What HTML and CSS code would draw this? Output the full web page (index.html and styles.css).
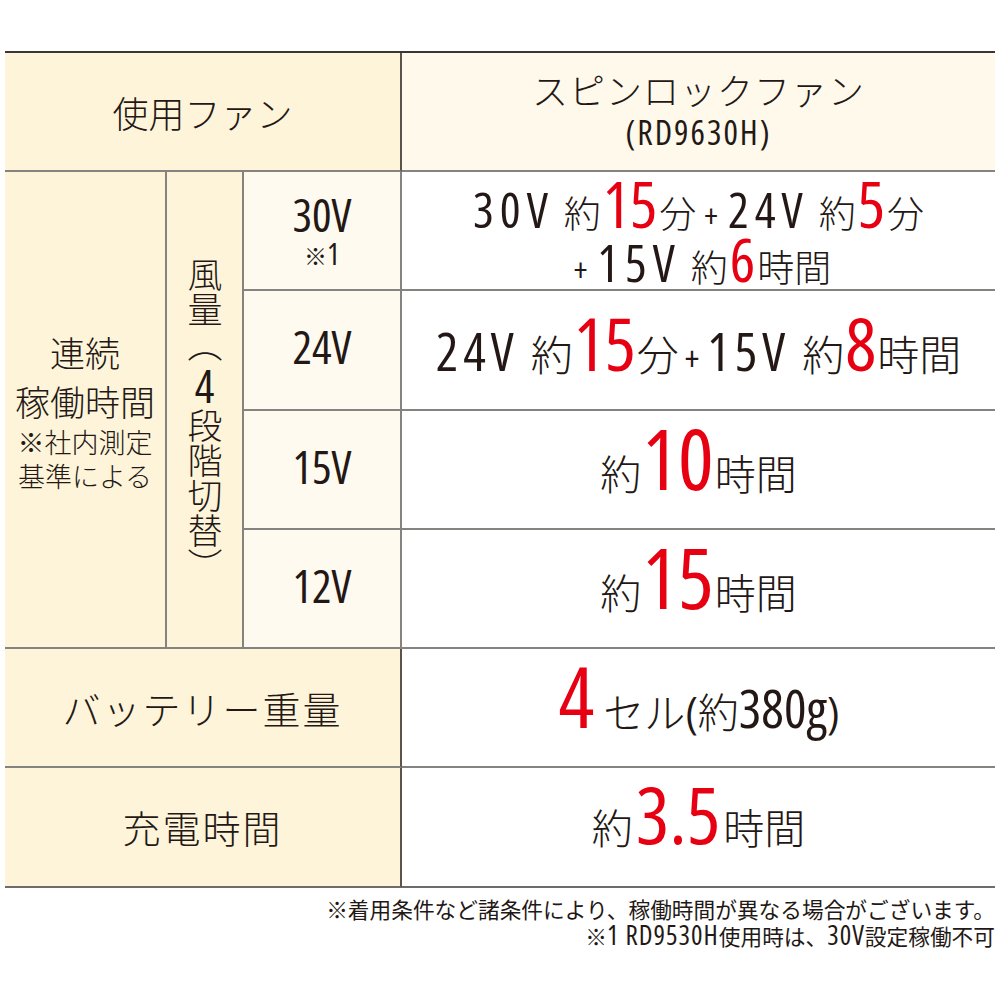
FILE: index.html
```html
<!DOCTYPE html>
<html lang="ja">
<head>
<meta charset="utf-8">
<title>スピンロックファン 仕様</title>
<link rel="stylesheet" href="styles.css">
</head>
<body>
<div class="sheet">
  <div class="spec">
    <div class="cell head span3"><span class="t36">使用ファン</span></div>
    <div class="cell head-r">
      <div class="fan">スピンロックファン</div>
      <div class="model">(RD9630H)</div>
    </div>

    <div class="cell run">
      <div class="run-big">連続</div>
      <div class="run-big">稼働時間</div>
      <div class="run-small">※社内測定</div>
      <div class="run-small">基準による</div>
    </div>
    <div class="cell wind"><span class="vt">風量（<span class="tcu">4</span>段階切替）</span></div>

    <div class="cell volt v30"><span class="vlab">30V</span><span class="vnote"><span class="kome">※</span>1</span></div>
    <div class="cell val r1">
      <div class="line"><span class="dg">30V</span><span class="kj sp">約</span><span class="red">15</span><span class="kj">分</span><span class="plus">+</span><span class="dg">24V</span><span class="kj sp">約</span><span class="red">5</span><span class="kj">分</span></div>
      <div class="line"><span class="plus">+</span><span class="dg">15V</span><span class="kj sp">約</span><span class="red">6</span><span class="kj">時間</span></div>
    </div>

    <div class="cell volt"><span class="vlab">24V</span></div>
    <div class="cell val r2">
      <div class="line"><span class="dg">24V</span><span class="kj sp">約</span><span class="red">15</span><span class="kj">分</span><span class="plus">+</span><span class="dg">15V</span><span class="kj sp">約</span><span class="red">8</span><span class="kj">時間</span></div>
    </div>

    <div class="cell volt"><span class="vlab">15V</span></div>
    <div class="cell val big">
      <div class="line"><span class="kj">約</span><span class="red">10</span><span class="kj">時間</span></div>
    </div>

    <div class="cell volt"><span class="vlab">12V</span></div>
    <div class="cell val big">
      <div class="line"><span class="kj">約</span><span class="red">15</span><span class="kj">時間</span></div>
    </div>

    <div class="cell head span3"><span class="t40">バッテリー重量</span></div>
    <div class="cell val big">
      <div class="line"><span class="red">4</span><span class="kj cell-s">セル</span><span class="par">(</span><span class="kj">約</span><span class="dg2">380g</span><span class="par">)</span></div>
    </div>

    <div class="cell head span3 last"><span class="t40">充電時間</span></div>
    <div class="cell val big charge last">
      <div class="line"><span class="kj">約</span><span class="red">3.5</span><span class="kj">時間</span></div>
    </div>
  </div>

  <div class="notes">
    <div>※着用条件など諸条件により、稼働時間が異なる場合がございます。</div>
    <div>※<span class="nn">1 RD9530H</span>使用時は、<span class="nn">30V</span>設定稼働不可</div>
  </div>
</div>
</body>
</html>
```

FILE: styles.css
```css
* { box-sizing: border-box; }

html, body {
  margin: 0;
  padding: 0;
  background: #ffffff;
}

body {
  font-family: "Noto Sans CJK JP", "Noto Sans", sans-serif;
  color: #231815;
}

.sheet {
  width: 1000px;
  padding: 51px 5px 0 5px;
}

.spec {
  display: grid;
  grid-template-columns: 162px 77px 158px 1fr;
  grid-template-rows: 119px 119px 120px 119px 119px 119px 120px;
  border-top: 2px solid #3b3634;
}

.cell {
  display: flex;
  flex-direction: column;
  align-items: center;
  justify-content: center;
  border-bottom: 2px solid #858380;
  border-right: 2px solid #858380;
  font-weight: 300;
  line-height: 1;
}

.head {
  background: #fef4da;
}

.span3 {
  grid-column: 1 / span 3;
  border-right-color: #5c544c;
}

.head-r {
  grid-column: 4;
  background: #fff9ec;
  border-right: none;
}

.t36 {
  font-size: 36px;
}

.t40 {
  font-size: 38px;
  letter-spacing: 2px;
}

.fan {
  font-size: 36px;
  letter-spacing: 1px;
  margin-top: -4px;
}

/* condensed latin figures */
.model, .tcu, .volt, .dg, .dg2, .red, .plus, .par, .nn, .vnote {
  font-family: "Open Sans", sans-serif;
  font-stretch: 75%;
  font-weight: 400;
}

.model {
  font-size: 34px;
  letter-spacing: 2px;
  margin-top: 8px;
}

.run {
  grid-column: 1;
  grid-row: 2 / span 4;
  background: #fef4da;
}

.run-big {
  font-size: 35px;
  line-height: 49px;
}

.run-small {
  font-size: 27px;
  line-height: 34px;
}

.wind {
  grid-column: 2;
  grid-row: 2 / span 4;
  background: #fef4da;
  padding-top: 20px;
}

.vt {
  writing-mode: vertical-rl;
  font-size: 35px;
  line-height: 1;
}

.tcu {
  text-combine-upright: all;
  font-size: 46px;
}

.volt {
  grid-column: 3;
  background: #fffaf0;
  padding-bottom: 8px;
}

.vlab {
  font-size: 46px;
  line-height: 40px;
}

.volt.v30 {
  padding-top: 2px;
  padding-bottom: 0;
}

.vnote {
  font-size: 30px;
  line-height: 28px;
  margin-top: 6px;
}

.kome {
  font-family: "Noto Sans CJK JP", sans-serif;
  font-weight: 300;
  font-size: 23px;
}

.val {
  grid-column: 4;
  border-right: none;
  background: #ffffff;
}

.line {
  white-space: nowrap;
  font-size: 0;
  line-height: 1;
}

.red {
  color: #e60012;
}

.r1 .dg { font-size: 49px; letter-spacing: 6px; }
.r1 .kj { font-size: 37px; }
.r1 .sp { margin-left: 10px; }
.r1 .red { font-size: 64px; margin: 0 2px; }
.r1 .plus { font-size: 32px; margin: 0 10px 0 8px; }
.r1 .line + .line .dg { font-size: 51px; }
.r1 .line + .line .red { font-size: 60px; }
.r1 .line + .line { margin-top: -7px; }

.r2 { padding-bottom: 16px; }
.r2 .dg { font-size: 53px; letter-spacing: 5px; }
.r2 .kj { font-size: 42px; }
.r2 .sp { margin-left: 12px; }
.r2 .red { font-size: 73px; margin: 0 1px; }
.r2 .plus { font-size: 34px; margin: 0 8px 0 6px; }

.big { padding-bottom: 24px; }
.big .kj { font-size: 41px; }
.big .red { font-size: 84px; margin: 0 1px; }
.big .dg2 { font-size: 53px; }
.big .par { font-size: 44px; }
.big .cell-s { margin-left: 8px; }

.big.charge { padding-bottom: 28px; }
.charge .red { font-size: 79px; margin: 0 3px; }

.last {
  border-bottom-color: #6e6b68;
}

.notes {
  text-align: right;
  font-size: 21.7px;
  line-height: 27px;
  margin-top: 7px;
  font-weight: 400;
}

.nn {
  font-size: 27px;
  line-height: 20px;
  letter-spacing: 1px;
}
```
